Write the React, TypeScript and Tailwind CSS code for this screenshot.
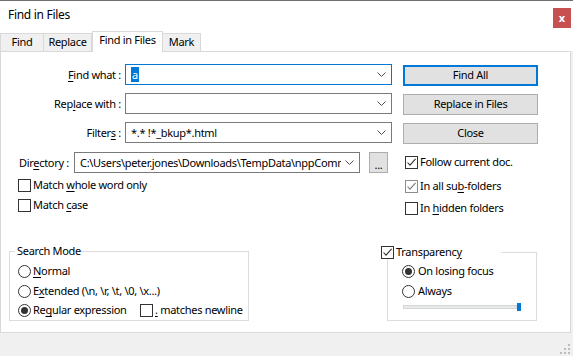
import React from 'react';

type Kids = { children?: React.ReactNode };

const U = ({ children }: Kids) => (
  <span className="underline decoration-1 underline-offset-[2px]">{children}</span>
);

const Chevron = () => (
  <svg width="9" height="5" viewBox="0 0 9 5" className="shrink-0">
    <path d="M0.5 0.5 L4.5 4.5 L8.5 0.5" fill="none" stroke="#4d4d4d" strokeWidth="1" />
  </svg>
);

const Combo = ({ className, focused, children }: Kids & { className: string; focused?: boolean }) => (
  <div
    className={`flex h-[21px] items-center bg-white border ${focused ? 'border-[#0078d7]' : 'border-[#7a7a7a]'} ${className}`}
  >
    <div className="flex-1 overflow-hidden whitespace-nowrap pl-[5px] leading-[19px]">{children}</div>
    <div className="flex w-[18px] shrink-0 items-center justify-start pl-[4px]">
      <Chevron />
    </div>
  </div>
);

const Button = ({ children, primary }: Kids & { primary?: boolean }) => (
  <div
    className={`flex h-[21px] w-[135px] items-center justify-center bg-[#e1e1e1] ${
      primary ? 'border-2 border-[#0078d7]' : 'border border-[#adadad]'
    }`}
  >
    {children}
  </div>
);

const Check = ({ checked, dim }: { checked?: boolean; dim?: boolean }) => (
  <span
    className={`flex h-[13px] w-[13px] shrink-0 items-center justify-center border bg-white ${
      dim ? 'border-[#8c8c8c]' : 'border-[#333333]'
    }`}
  >
    {checked && (
      <svg width="11" height="11" viewBox="0 0 11 11">
        <path d="M1.5 5.5 L4 8.2 L9.6 1.8" fill="none" stroke={dim ? '#7a7a7a' : '#333333'} strokeWidth="1.1" />
      </svg>
    )}
  </span>
);

const Radio = ({ checked }: { checked?: boolean }) => (
  <span className="flex h-[13px] w-[13px] shrink-0 items-center justify-center rounded-full border border-[#333333] bg-white">
    {checked && <span className="h-[7px] w-[7px] rounded-full bg-[#333333]" />}
  </span>
);

const CheckRow = ({ children, checked, dim, h }: Kids & { checked?: boolean; dim?: boolean; h: string }) => (
  <div className={`flex items-center gap-[2px] ${h}`}>
    <Check checked={checked} dim={dim} />
    <span className="whitespace-nowrap">{children}</span>
  </div>
);

const RadioRow = ({ children, checked, h, gap }: Kids & { checked?: boolean; h: string; gap: string }) => (
  <div className={`flex items-center ${gap} ${h}`}>
    <Radio checked={checked} />
    <span className="whitespace-nowrap">{children}</span>
  </div>
);

const Grip = () => (
  <svg width="11" height="11" viewBox="0 0 11 11">
    <g fill="#bcbcbc">
      <rect x="8" y="0" width="2" height="2" />
      <rect x="4" y="4" width="2" height="2" />
      <rect x="8" y="4" width="2" height="2" />
      <rect x="0" y="8" width="2" height="2" />
      <rect x="4" y="8" width="2" height="2" />
      <rect x="8" y="8" width="2" height="2" />
    </g>
  </svg>
);

export default function App() {
  const tabs = [
    { name: 'Find', w: 'w-[44px] border-l', active: false },
    { name: 'Replace', w: 'w-[48px]', active: false },
    { name: 'Find in Files', w: 'w-[71px] border-l', active: true },
    { name: 'Mark', w: 'w-[38px]', active: false },
  ];

  return (
    <div className="flex h-[356px] w-[573px] flex-col overflow-hidden border-t border-[#707070] bg-white text-[11px] tracking-[-0.3px] text-black font-['Noto_Sans',sans-serif]">
      {/* title bar */}
      <div className="flex h-[30px] shrink-0 items-start justify-between pr-[2px]">
        <div className="pl-[8px] pt-[6px] text-[12px] leading-[16px]">Find in Files</div>
        <div className="mt-[7px] flex h-[20px] w-[18px] items-center justify-center bg-[#c75050] pb-[2px] text-[11px] font-bold leading-none tracking-normal text-white">
          x
        </div>
      </div>

      {/* tabs */}
      <div className="flex h-[20px] shrink-0 items-end">
        {tabs.map((t) =>
          t.active ? (
            <div
              key={t.name}
              className={`relative z-10 -mb-px flex h-[21px] items-center justify-center border-r border-t border-[#d9d9d9] bg-white pb-[3px] ${t.w}`}
            >
              {t.name}
            </div>
          ) : (
            <div
              key={t.name}
              className={`flex h-[18px] items-center justify-center border-r border-t border-[#d9d9d9] bg-[#f0f0f0] ${t.w}`}
            >
              {t.name}
            </div>
          )
        )}
        <div className="flex-1" />
      </div>

      {/* tab page */}
      <div className="flex h-[282px] shrink-0 bg-[#f0f0f0]">
        <div className="flex h-[282px] w-[571px] shrink-0 flex-col border border-[#d9d9d9] bg-white pt-[12px] pb-[11px]">
          <div className="flex h-[21px] items-start">
            <div className="h-[21px] w-[124px] pr-[4px] text-right leading-[21px]">
              <U>F</U>ind what :
            </div>
            <Combo className="w-[267px]" focused>
              <span className="bg-[#0078d7] px-px text-white">a</span>
            </Combo>
            <div className="ml-[11px] mt-px">
              <Button primary>Find All</Button>
            </div>
          </div>

          <div className="mt-[8px] flex h-[21px] items-start">
            <div className="h-[21px] w-[124px] pr-[4px] text-right leading-[21px]">
              Rep<U>l</U>ace with :
            </div>
            <Combo className="w-[267px]" />
            <div className="ml-[11px] mt-px">
              <Button>Replace in Files</Button>
            </div>
          </div>

          <div className="mt-[8px] flex h-[21px] items-start">
            <div className="h-[21px] w-[124px] pr-[4px] text-right leading-[21px]">
              Filter<U>s</U> :
            </div>
            <Combo className="w-[267px]">*.* !*_bkup*.html</Combo>
            <div className="ml-[11px] mt-px">
              <Button>Close</Button>
            </div>
          </div>

          <div className="mt-[9px] flex h-[21px] items-center pl-[18px]">
            <div className="h-[21px] w-[55px] leading-[21px]">
              Dir<U>e</U>ctory :
            </div>
            <Combo className="w-[286px]">C:\Users\peter.jones\Downloads\TempData\nppCommunity</Combo>
            <div className="ml-[9px] flex h-[21px] w-[19px] items-end justify-center border border-[#adadad] bg-[#e1e1e1] pb-[2px] leading-[10px]">
              ...
            </div>
            <div className="ml-[17px]">
              <CheckRow h="h-[21px]" checked>
                Follow current doc.
              </CheckRow>
            </div>
          </div>

          <div className="mt-[2px] flex">
            <div className="w-[404px] pl-[17px]">
              <CheckRow h="h-[20px]">
                Match <U>w</U>hole word only
              </CheckRow>
              <CheckRow h="h-[20px]">
                Match <U>c</U>ase
              </CheckRow>
            </div>
            <div>
              <CheckRow h="h-[22px]" checked dim>
                In all su<U>b</U>-folders
              </CheckRow>
              <CheckRow h="h-[22px]">
                In <U>h</U>idden folders
              </CheckRow>
            </div>
          </div>

          <div className="mt-auto flex items-end">
            <fieldset className="ml-[8px] w-[240px] border border-[#dcdcdc] pb-0 pl-[8px]">
              <legend className="ml-[-3px] pl-[2px] leading-[14px]">Search Mode</legend>
              <div className="pt-[3px]">
                <RadioRow h="h-[20px]" gap="gap-[2px]">
                  <U>N</U>ormal
                </RadioRow>
                <RadioRow h="h-[20px]" gap="gap-[2px]">
                  E<U>x</U>tended (\n, \r, \t, \0, \x...)
                </RadioRow>
                <div className="flex h-[19px] items-center">
                  <div className="w-[122px]">
                    <RadioRow h="h-[19px]" gap="gap-[2px]" checked>
                      Re<U>g</U>ular expression
                    </RadioRow>
                  </div>
                  <CheckRow h="h-[19px]">
                    <U>.</U> matches newline
                  </CheckRow>
                </div>
              </div>
            </fieldset>

            <fieldset className="ml-[138px] w-[150px] border border-[#dcdcdc] pl-[14px]">
              <legend className="ml-[-21px] w-[120px]">
                <CheckRow h="h-[14px]" checked>
                  Transparenc<U>y</U>
                </CheckRow>
              </legend>
              <div className="pt-[2px]">
                <RadioRow h="h-[20px]" gap="gap-[3px]" checked>
                  On losing focus
                </RadioRow>
                <RadioRow h="h-[20px]" gap="gap-[3px]">
                  Always
                </RadioRow>
                <div className="h-[19px] pl-px pt-[2px]">
                  <div className="flex h-[8px] w-[118px] items-center">
                    <div className="h-[4px] flex-1 border border-[#d6d6d6] bg-[#e7eaea]" />
                    <div className="h-[8px] w-[4px] bg-[#0078d7]" />
                  </div>
                </div>
              </div>
            </fieldset>
          </div>
        </div>
      </div>

      {/* status strip */}
      <div className="flex flex-1 items-end justify-end bg-[#f0f0f0] pb-px pr-[2px]">
        <Grip />
      </div>
    </div>
  );
}
